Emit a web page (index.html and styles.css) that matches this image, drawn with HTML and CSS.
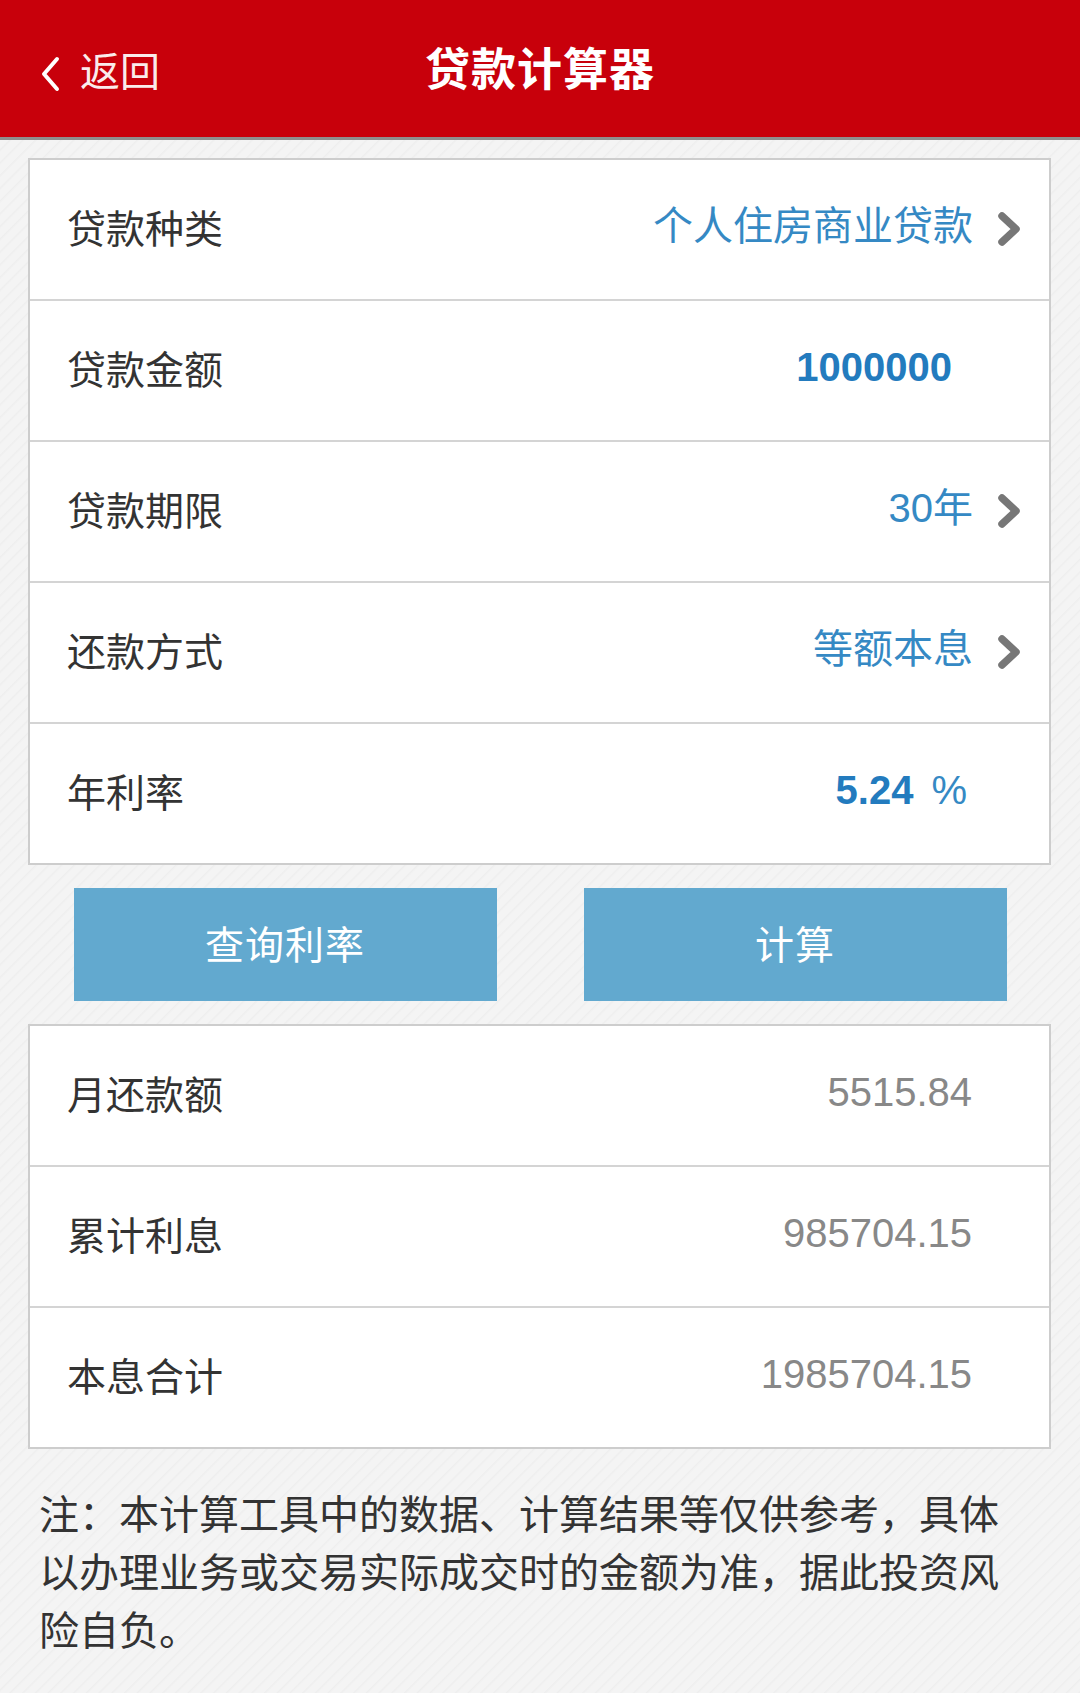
FILE: index.html
```html
<!DOCTYPE html>
<html lang="zh-CN">
<head>
<meta charset="utf-8">
<title>贷款计算器</title>
<link rel="stylesheet" href="styles.css">
</head>
<body>
<header class="topbar">
  <div class="back">
    <svg class="back-icon" viewBox="0 0 20 36" width="20" height="36"><path d="M17 3 L4 18 L17 33" fill="none" stroke="#fff" stroke-width="4" stroke-linecap="round" stroke-linejoin="round"/></svg>
    <span class="back-text">返回</span>
  </div>
  <h1 class="title">贷款计算器</h1>
</header>

<section class="card">
  <div class="row">
    <span class="label">贷款种类</span>
    <span class="value">个人住房商业贷款</span>
    <svg class="arrow" viewBox="0 0 28 36" width="28" height="36"><path d="M7 5 L21 18 L7 31" fill="none" stroke="#777" stroke-width="7.5" stroke-linecap="round" stroke-linejoin="round"/></svg>
  </div>
  <div class="row row-amount">
    <span class="label">贷款金额</span>
    <span class="value value-bold">1000000</span>
  </div>
  <div class="row">
    <span class="label">贷款期限</span>
    <span class="value">30年</span>
    <svg class="arrow" viewBox="0 0 28 36" width="28" height="36"><path d="M7 5 L21 18 L7 31" fill="none" stroke="#777" stroke-width="7.5" stroke-linecap="round" stroke-linejoin="round"/></svg>
  </div>
  <div class="row">
    <span class="label">还款方式</span>
    <span class="value">等额本息</span>
    <svg class="arrow" viewBox="0 0 28 36" width="28" height="36"><path d="M7 5 L21 18 L7 31" fill="none" stroke="#777" stroke-width="7.5" stroke-linecap="round" stroke-linejoin="round"/></svg>
  </div>
  <div class="row row-rate">
    <span class="label">年利率</span>
    <span class="value"><b class="value-bold">5.24</b><span class="pct">%</span></span>
  </div>
</section>

<div class="actions">
  <button class="btn" type="button">查询利率</button>
  <button class="btn" type="button">计算</button>
</div>

<section class="card">
  <div class="row row-result">
    <span class="label">月还款额</span>
    <span class="result">5515.84</span>
  </div>
  <div class="row row-result">
    <span class="label">累计利息</span>
    <span class="result">985704.15</span>
  </div>
  <div class="row row-result">
    <span class="label">本息合计</span>
    <span class="result">1985704.15</span>
  </div>
</section>

<p class="note">注：本计算工具中的数据、计算结果等仅供参考，具体以办理业务或交易实际成交时的金额为准，据此投资风险自负。</p>
</body>
</html>
```

FILE: styles.css
```css
html, body {
  margin: 0;
  padding: 0;
}
body {
  width: 1080px;
  min-height: 1693px;
  font-family: "Liberation Sans", "Noto Sans CJK SC", sans-serif;
  color: #333;
  background-color: #f2f2f2;
  background-image: repeating-linear-gradient(135deg, #f4f4f4 0px, #f4f4f4 6px, #eeeeee 7px, #f4f4f4 9px);
}
.topbar {
  height: 137px;
  background: #c8000b;
  border-bottom: 3px solid #8f8f8f;
  display: flex;
  align-items: center;
  justify-content: center;
  position: relative;
}
.back {
  position: absolute;
  left: 40px;
  top: 46px;
  display: flex;
  align-items: center;
  gap: 20px;
  color: #fff;
}
.back-icon {
  display: block;
  margin-top: 10px;
}
.back-text {
  font-family: "Noto Sans CJK SC", sans-serif;
  font-size: 40px;
  line-height: 42px;
  opacity: 0.92;
}
.title {
  margin: 0 0 4px 0;
  font-family: "Noto Sans CJK SC", sans-serif;
  font-size: 45px;
  font-weight: 700;
  color: #fff;
  line-height: 50px;
  letter-spacing: 1px;
}
.card {
  margin: 18px 29px 0 28px;
  background: #fff;
  border: 2px solid #cdcdcd;
}
.row {
  height: 141px;
  box-sizing: border-box;
  display: flex;
  align-items: center;
  padding: 0 26px 8px 37px;
  border-bottom: 2px solid #d4d4d4;
}
.row:last-child {
  height: 139px;
  border-bottom: none;
}
.label {
  flex: 1;
  font-family: "Noto Sans CJK SC", sans-serif;
  font-size: 39px;
  line-height: 44px;
  color: #333;
}
.value {
  font-size: 40px;
  line-height: 44px;
  color: #3589c4;
}
.value-bold {
  font-family: "Liberation Sans", sans-serif;
  font-weight: 700;
  font-size: 40px;
  color: #237bbe;
}
.pct {
  font-family: "Liberation Sans", sans-serif;
  font-weight: 400;
  font-size: 40px;
  margin-left: 18px;
  color: #3589c4;
}
.arrow {
  display: block;
  margin-left: 22px;
  margin-top: 6px;
}
.row-amount { padding-right: 97px; }
.row-rate { padding-right: 82px; }
.row-result { padding-right: 77px; }
.result {
  font-size: 40px;
  line-height: 44px;
  color: #888;
}
.actions {
  display: flex;
  justify-content: center;
  gap: 87px;
  margin: 23px 0;
}
.btn {
  width: 423px;
  height: 113px;
  border: none;
  background: #62a9cf;
  color: #fff;
  font-family: "Noto Sans CJK SC", sans-serif;
  font-size: 39px;
  padding: 0 0 6px 0;
  letter-spacing: 1px;
}
.note {
  margin: 34px 0 0 0;
  padding: 0 60px 0 39px;
  font-family: "Noto Sans CJK SC", sans-serif;
  font-size: 40px;
  line-height: 58px;
  color: #333;
}
```
